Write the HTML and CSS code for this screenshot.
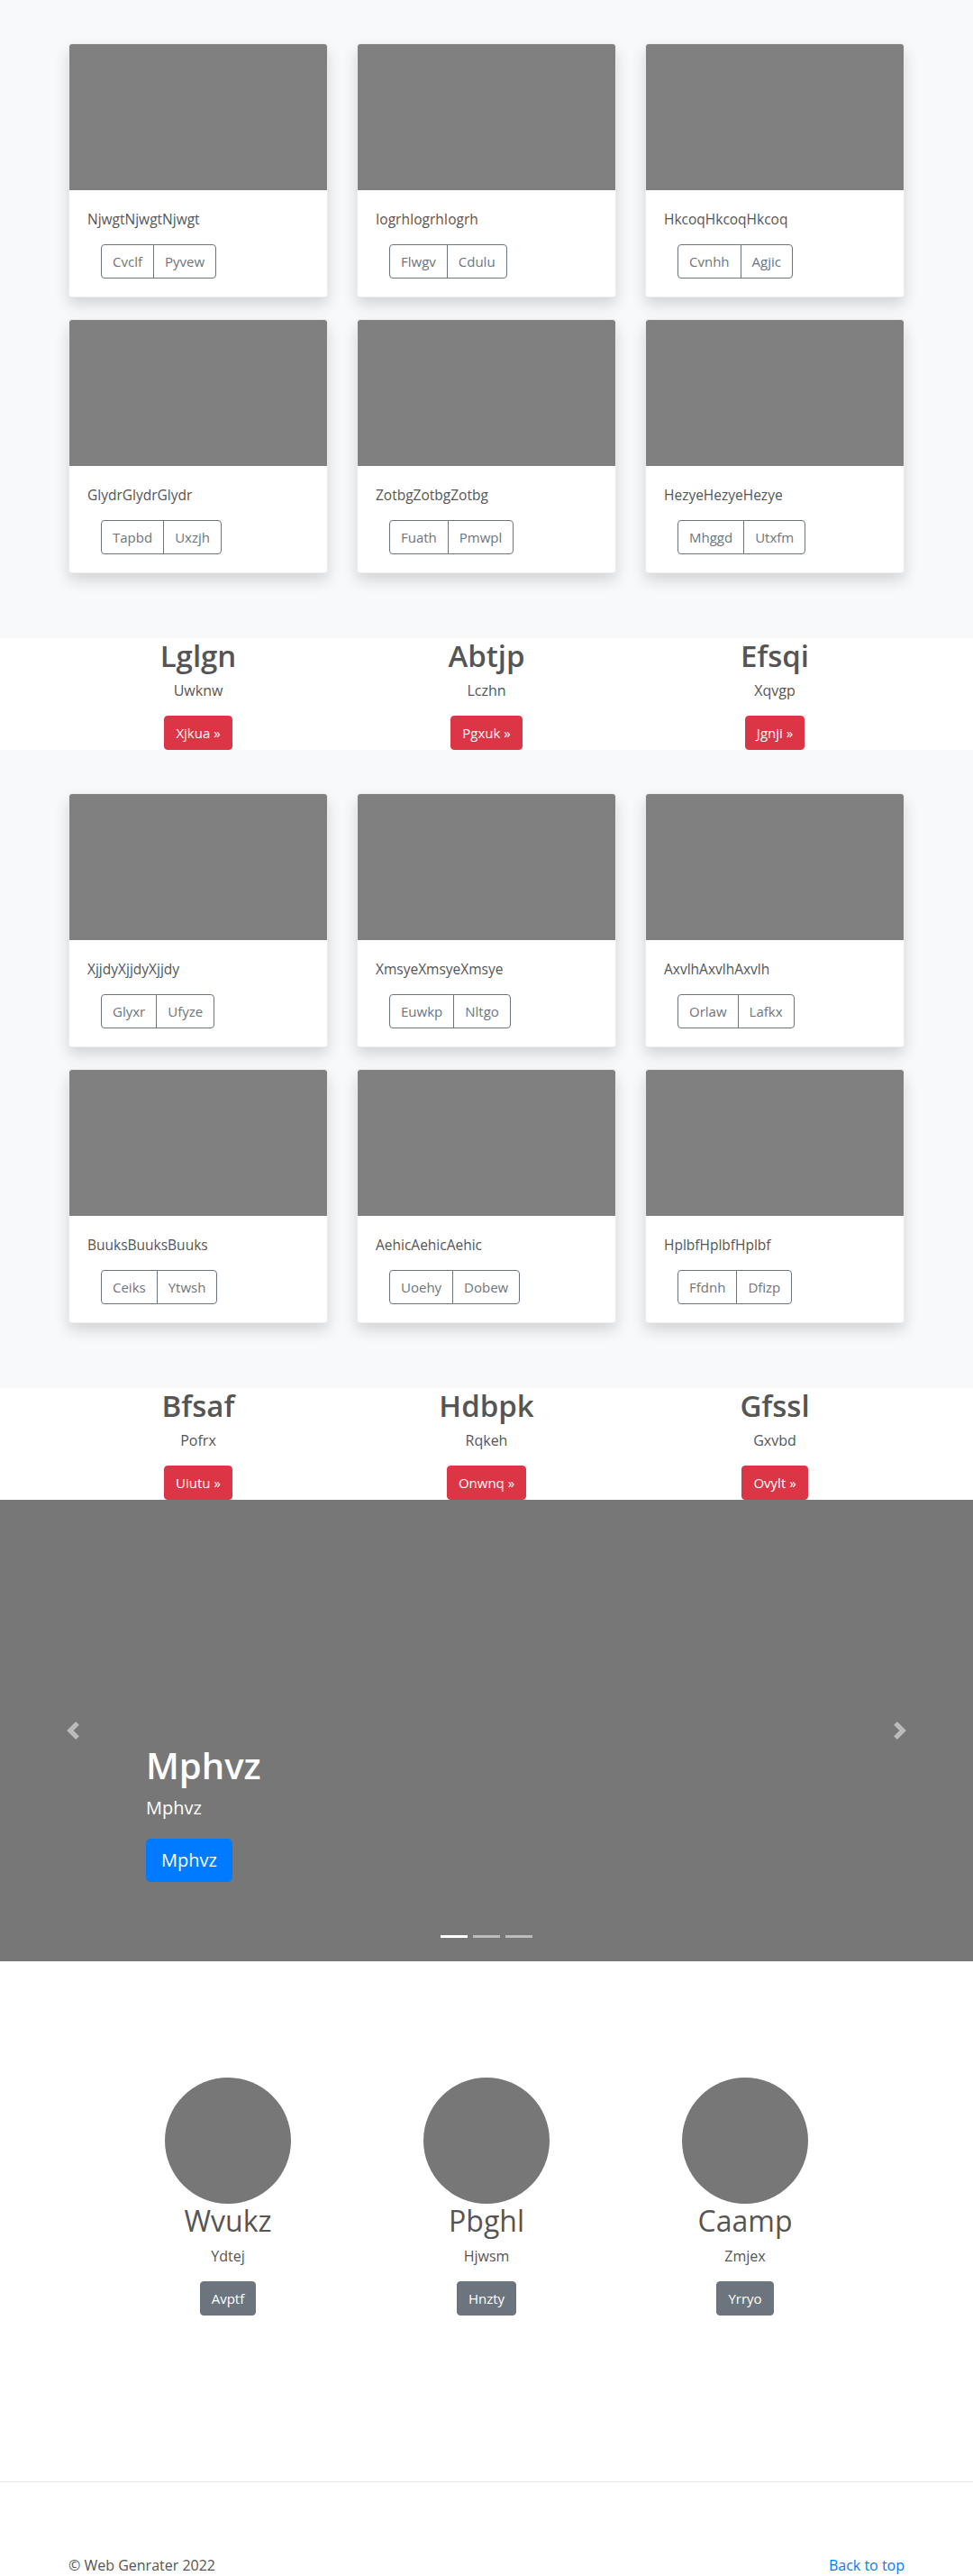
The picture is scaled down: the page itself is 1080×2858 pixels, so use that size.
FILE: index.html
```html
<!DOCTYPE html>
<html lang="en">
<head>
<meta charset="utf-8">
<title>Page</title>
<link rel="stylesheet" href="styles.css">
</head>
<body>
<main>
  <section class="album">
    <div class="container grid3">
      <div class="card"><div class="card-img"></div><div class="card-body"><p class="card-text">NjwgtNjwgtNjwgt</p><div class="btn-group"><a class="btn btn-outline">Cvclf</a><a class="btn btn-outline">Pyvew</a></div></div></div>
      <div class="card"><div class="card-img"></div><div class="card-body"><p class="card-text">IogrhIogrhIogrh</p><div class="btn-group"><a class="btn btn-outline">Flwgv</a><a class="btn btn-outline">Cdulu</a></div></div></div>
      <div class="card"><div class="card-img"></div><div class="card-body"><p class="card-text">HkcoqHkcoqHkcoq</p><div class="btn-group"><a class="btn btn-outline">Cvnhh</a><a class="btn btn-outline">Agjic</a></div></div></div>
      <div class="card"><div class="card-img"></div><div class="card-body"><p class="card-text">GlydrGlydrGlydr</p><div class="btn-group"><a class="btn btn-outline">Tapbd</a><a class="btn btn-outline">Uxzjh</a></div></div></div>
      <div class="card"><div class="card-img"></div><div class="card-body"><p class="card-text">ZotbgZotbgZotbg</p><div class="btn-group"><a class="btn btn-outline">Fuath</a><a class="btn btn-outline">Pmwpl</a></div></div></div>
      <div class="card"><div class="card-img"></div><div class="card-body"><p class="card-text">HezyeHezyeHezye</p><div class="btn-group"><a class="btn btn-outline">Mhggd</a><a class="btn btn-outline">Utxfm</a></div></div></div>
    </div>
  </section>

  <section class="features">
    <div class="container grid3">
      <div class="feature"><h2 class="feature-title">Lglgn</h2><p class="feature-text">Uwknw</p><a class="btn btn-danger">Xjkua &raquo;</a></div>
      <div class="feature"><h2 class="feature-title">Abtjp</h2><p class="feature-text">Lczhn</p><a class="btn btn-danger">Pgxuk &raquo;</a></div>
      <div class="feature"><h2 class="feature-title">Efsqi</h2><p class="feature-text">Xqvgp</p><a class="btn btn-danger">Jgnji &raquo;</a></div>
    </div>
  </section>

  <section class="album">
    <div class="container grid3">
      <div class="card"><div class="card-img"></div><div class="card-body"><p class="card-text">XjjdyXjjdyXjjdy</p><div class="btn-group"><a class="btn btn-outline">Glyxr</a><a class="btn btn-outline">Ufyze</a></div></div></div>
      <div class="card"><div class="card-img"></div><div class="card-body"><p class="card-text">XmsyeXmsyeXmsye</p><div class="btn-group"><a class="btn btn-outline">Euwkp</a><a class="btn btn-outline">Nltgo</a></div></div></div>
      <div class="card"><div class="card-img"></div><div class="card-body"><p class="card-text">AxvlhAxvlhAxvlh</p><div class="btn-group"><a class="btn btn-outline">Orlaw</a><a class="btn btn-outline">Lafkx</a></div></div></div>
      <div class="card"><div class="card-img"></div><div class="card-body"><p class="card-text">BuuksBuuksBuuks</p><div class="btn-group"><a class="btn btn-outline">Ceiks</a><a class="btn btn-outline">Ytwsh</a></div></div></div>
      <div class="card"><div class="card-img"></div><div class="card-body"><p class="card-text">AehicAehicAehic</p><div class="btn-group"><a class="btn btn-outline">Uoehy</a><a class="btn btn-outline">Dobew</a></div></div></div>
      <div class="card"><div class="card-img"></div><div class="card-body"><p class="card-text">HplbfHplbfHplbf</p><div class="btn-group"><a class="btn btn-outline">Ffdnh</a><a class="btn btn-outline">Dfizp</a></div></div></div>
    </div>
  </section>

  <section class="features">
    <div class="container grid3">
      <div class="feature"><h2 class="feature-title">Bfsaf</h2><p class="feature-text">Pofrx</p><a class="btn btn-danger">Uiutu &raquo;</a></div>
      <div class="feature"><h2 class="feature-title">Hdbpk</h2><p class="feature-text">Rqkeh</p><a class="btn btn-danger">Onwnq &raquo;</a></div>
      <div class="feature"><h2 class="feature-title">Gfssl</h2><p class="feature-text">Gxvbd</p><a class="btn btn-danger">Ovylt &raquo;</a></div>
    </div>
  </section>

  <section class="carousel">
    <a class="carousel-control prev">
      <svg width="20" height="20" viewBox="0 0 8 8"><path fill="#fff" d="M5.25 0l-4 4 4 4 1.5-1.5-2.5-2.5 2.5-2.5-1.5-1.5z"/></svg>
    </a>
    <div class="carousel-caption">
      <h1 class="caption-title">Mphvz</h1>
      <p class="caption-lead">Mphvz</p>
      <a class="btn btn-primary btn-lg">Mphvz</a>
    </div>
    <a class="carousel-control next">
      <svg width="20" height="20" viewBox="0 0 8 8"><path fill="#fff" d="M2.75 0l-1.5 1.5 2.5 2.5-2.5 2.5 1.5 1.5 4-4-4-4z"/></svg>
    </a>
    <ol class="carousel-indicators">
      <li class="indicator active"></li>
      <li class="indicator"></li>
      <li class="indicator"></li>
    </ol>
  </section>

  <section class="marketing">
    <div class="marketing-row">
      <div class="marketing-col"><div class="avatar"></div><h2 class="marketing-title">Wvukz</h2><p class="marketing-text">Ydtej</p><a class="btn btn-secondary">Avptf</a></div>
      <div class="marketing-col"><div class="avatar"></div><h2 class="marketing-title">Pbghl</h2><p class="marketing-text">Hjwsm</p><a class="btn btn-secondary">Hnzty</a></div>
      <div class="marketing-col"><div class="avatar"></div><h2 class="marketing-title">Caamp</h2><p class="marketing-text">Zmjex</p><a class="btn btn-secondary">Yrryo</a></div>
    </div>
  </section>

  <hr class="divider">

  <footer class="footer container">
    <p class="copy">&copy; Web Genrater 2022</p>
    <a class="back-top" href="#">Back to top</a>
  </footer>
</main>
</body>
</html>
```

FILE: styles.css
```css
* { box-sizing: border-box; }

html, body {
  margin: 0;
  padding: 0;
}

body {
  font-family: "Open Sans", "Noto Sans", "Liberation Sans", sans-serif;
  font-size: 16px;
  line-height: 1.5;
  color: #555;
  background: #fff;
}

.container {
  width: 928px;
  margin: 0 auto;
}

.grid3 {
  display: grid;
  grid-template-columns: repeat(3, 1fr);
  column-gap: 32px;
}

/* Album sections */
.album {
  background: #f8f9fa;
  padding: 48px 0 72px;
}

.album .grid3 {
  row-gap: 24px;
}

.card {
  background: #fff;
  border: 1px solid rgba(0, 0, 0, 0.07);
  border-radius: 4px;
  box-shadow: 0 8px 16px rgba(0, 0, 0, 0.15);
  overflow: hidden;
}

.card-img {
  height: 162px;
  background: #808080;
}

.card-body {
  padding: 20px;
}

.card-text {
  margin: 0 0 16px;
  color: #555;
  font-size: 15.5px;
  line-height: 24px;
}

.btn-group {
  display: flex;
  margin-left: 15px;
}

.btn {
  display: inline-block;
  font-size: 16px;
  line-height: 24px;
  padding: 6px 12px;
  border: 1px solid transparent;
  border-radius: 4px;
  text-decoration: none;
  white-space: nowrap;
  text-align: center;
}

.btn-group .btn,
.btn-danger,
.btn-secondary {
  font-size: 15px;
}

.btn-outline {
  color: #6c757d;
  border-color: #6c757d;
  background: transparent;
}

.btn-group .btn:first-child {
  border-top-right-radius: 0;
  border-bottom-right-radius: 0;
}

.btn-group .btn:last-child {
  margin-left: -1px;
  border-top-left-radius: 0;
  border-bottom-left-radius: 0;
}

.btn-danger {
  background: #dc3545;
  border-color: #dc3545;
  color: #fff;
}

.btn-primary {
  background: #007bff;
  border-color: #007bff;
  color: #fff;
}

.btn-secondary {
  background: #6c757d;
  border-color: #6c757d;
  color: #fff;
}

.btn-lg {
  font-size: 20px;
  line-height: 30px;
  padding: 8px 16px;
  border-radius: 5px;
}

/* Feature rows */
.features {
  background: #fff;
}

.feature {
  display: flex;
  flex-direction: column;
  align-items: center;
}

.feature-title {
  margin: 0 0 6px;
  font-size: 33px;
  line-height: 40px;
  font-weight: 600;
  color: #555;
}

.feature-text {
  margin: 0 0 16px;
  color: #555;
}

/* Carousel */
.carousel {
  position: relative;
  height: 512px;
  background: #777;
}

.carousel-control {
  position: absolute;
  top: 0;
  bottom: 0;
  width: 15%;
  display: flex;
  align-items: center;
  justify-content: center;
  opacity: 0.5;
}

.carousel-control.prev { left: 0; }
.carousel-control.next { right: 0; }

.carousel-caption {
  position: absolute;
  left: 15%;
  right: 15%;
  bottom: 88px;
  display: flex;
  flex-direction: column;
  align-items: flex-start;
  color: #fff;
}

.caption-title {
  margin: 0 0 8px;
  font-size: 40px;
  line-height: 48px;
  font-weight: 600;
}

.caption-lead {
  margin: 0 0 19px;
  font-size: 20px;
  line-height: 30px;
}

.carousel-indicators {
  position: absolute;
  left: 0;
  right: 0;
  bottom: 26px;
  margin: 0;
  padding: 0;
  list-style: none;
  display: flex;
  justify-content: center;
  gap: 6px;
}

.indicator {
  width: 30px;
  height: 3px;
  background: #fff;
  opacity: 0.5;
}

.indicator.active {
  opacity: 1;
}

/* Marketing */
.marketing {
  padding: 129px 0 0;
}

.marketing-row {
  width: 861px;
  margin: 0 auto;
  display: grid;
  grid-template-columns: repeat(3, 1fr);
}

.marketing-col {
  display: flex;
  flex-direction: column;
  align-items: center;
}

.avatar {
  width: 140px;
  height: 140px;
  border-radius: 50%;
  background: #777;
}

.marketing-title {
  margin: 0 0 8px;
  font-size: 32px;
  line-height: 38.4px;
  font-weight: 400;
  color: #555;
}

.marketing-text {
  margin: 0 0 16px;
  color: #555;
}

.divider {
  margin: 184px 0 80px;
  border: 0;
  border-top: 1px solid #e5e5e5;
  height: 0;
}

/* Footer */
.footer {
  display: flex;
  justify-content: space-between;
  align-items: flex-start;
}

.copy {
  margin: 0;
  color: #555;
}

.back-top {
  color: #007bff;
  text-decoration: none;
}
```
